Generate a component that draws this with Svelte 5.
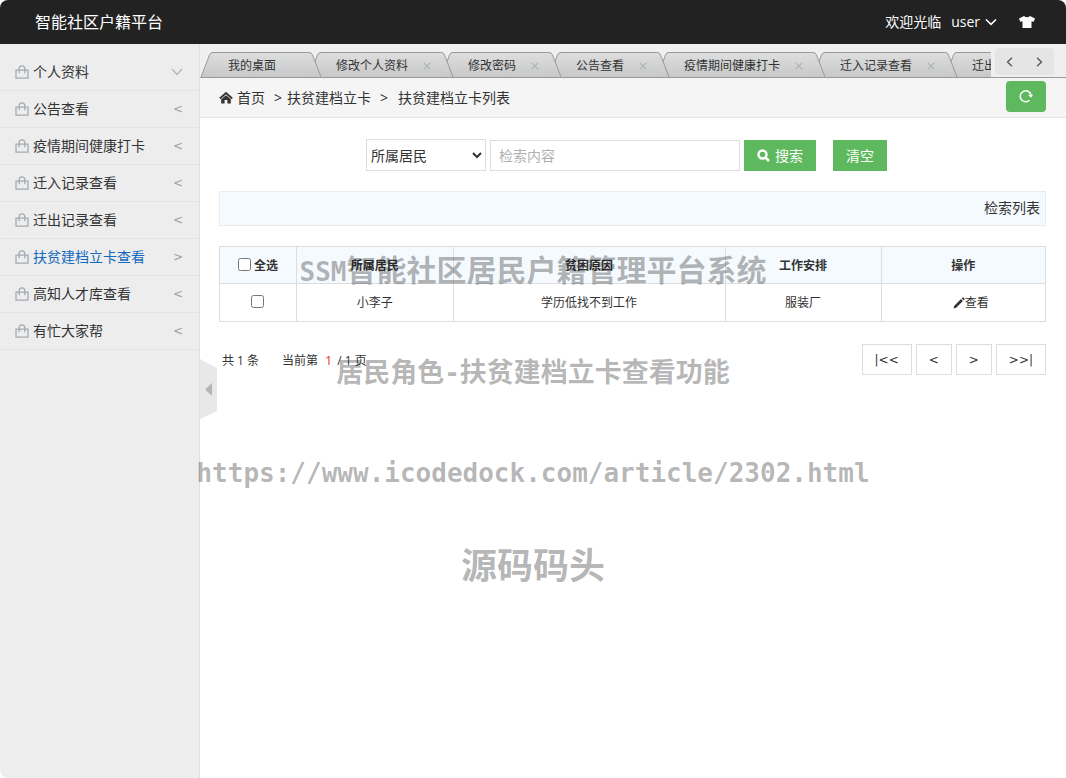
<script lang="ts">
interface MenuItem {
	name: string;
	arrow: "down" | "left" | "right";
}

const menu: MenuItem[] = [
	{ name: "个人资料", arrow: "down" },
	{ name: "公告查看", arrow: "left" },
	{ name: "疫情期间健康打卡", arrow: "left" },
	{ name: "迁入记录查看", arrow: "left" },
	{ name: "迁出记录查看", arrow: "left" },
	{ name: "扶贫建档立卡查看", arrow: "right" },
	{ name: "高知人才库查看", arrow: "left" },
	{ name: "有忙大家帮", arrow: "left" },
];

const tabs = [
	"我的桌面",
	"修改个人资料",
	"修改密码",
	"公告查看",
	"疫情期间健康打卡",
	"迁入记录查看",
	"迁出记录查看",
];

const rows = [{ id: 1, resident: "小李子", reason: "学历低找不到工作", job: "服装厂" }];

let keyword = "";
let checked: number[] = [];

$: allChecked = checked.length === rows.length;

function toggleAll() {
	checked = allChecked ? [] : rows.map((row) => row.id);
}
</script>

<div class="page">
	<header class="header">
		<h1 class="logo">智能社区户籍平台</h1>
		<div class="user-bar">
			<span>欢迎光临</span>
			<button class="user-btn">
				user
				<svg width="12" height="8" viewBox="0 0 12 8"><path d="M1 1.500 6 6.300 11 1.500" fill="none" stroke="#fff" stroke-width="1.600" /></svg>
			</button>
			<button class="skin-btn" aria-label="换肤">
				<svg width="16" height="12" viewBox="0 0 16 12"><path d="M5 0Q8 2.600 11 0L16 2.500 14.700 5.800 12.500 5.200V12H3.500V5.200L1.300 5.800 0 2.500Z" fill="#fff" /></svg>
			</button>
		</div>
	</header>

	<div class="body">
		<aside class="sidebar">
			{#each menu as item (item.name)}
				<a class="menu-item" class:active={item.arrow === "right"} href="#menu">
					<svg width="14" height="14" viewBox="0 0 14 14">
						<path d="M1 5.200H13V13.200H1Z" fill="none" stroke="#a3abb2" stroke-width="1.300" />
						<path d="M4.200 8.300V3.800Q4.200.8 7 .8T9.800 3.800V8.300" fill="none" stroke="#a3abb2" stroke-width="1.300" />
					</svg>
					<span class="menu-name">{item.name}</span>
					{#if item.arrow === "down"}
						<svg width="12" height="8" viewBox="0 0 12 8"><path d="M1 1 6 6.500 11 1" fill="none" stroke="#b5b5b5" stroke-width="1.200" /></svg>
					{:else}
						<span class="menu-arrow">{item.arrow === "left" ? "<" : ">"}</span>
					{/if}
				</a>
			{/each}
		</aside>

		<main class="main">
			<div class="tab-bar">
				<div class="tabs">
					{#each tabs as tab, i (tab)}
						<div class="tab" style="z-index: {tabs.length - i}">
							<svg width="12" height="25" viewBox="0 0 12 25">
								<path d="M0 25 8.500 3Q9.300.5 12 .5V25Z" fill="url(#tab-fill)" />
								<path d="M0 25 8.500 3Q9.300.5 12 .5" fill="none" stroke="#999" />
							</svg>
							<div class="tab-body">
								<span>{tab}</span>
								{#if i > 0}
									<button class="tab-close" aria-label="关闭">
										<svg width="8" height="8" viewBox="0 0 8 8"><path d="M.7.7 7.300 7.300M7.300.7.7 7.300" stroke="#aab2b8" stroke-width="1.200" /></svg>
									</button>
								{/if}
							</div>
							<svg width="12" height="25" viewBox="0 0 12 25">
								<path d="M0 .5Q2.700.5 3.500 3L12 25H0Z" fill="url(#tab-fill)" />
								<path d="M0 .5Q2.700.5 3.500 3L12 25" fill="none" stroke="#999" />
							</svg>
						</div>
					{/each}
				</div>
				<div class="tab-nav">
					<button aria-label="上一个">
						<svg width="7" height="10" viewBox="0 0 7 10"><path d="M6 .7 1.500 5 6 9.300" fill="none" stroke="#555" stroke-width="1.300" /></svg>
					</button>
					<button aria-label="下一个">
						<svg width="7" height="10" viewBox="0 0 7 10"><path d="M1 .7 5.500 5 1 9.300" fill="none" stroke="#555" stroke-width="1.300" /></svg>
					</button>
				</div>
			</div>

			<nav class="breadcrumb">
				<svg width="14" height="12" viewBox="0 0 14 12">
					<path d="M.8 6.500 7 1 13.200 6.500" fill="none" stroke="#333" stroke-width="1.800" />
					<path d="M2.200 7.200 7 3.200 11.800 7.200V11.500H8.400V8H5.600V11.500H2.200Z" fill="#333" />
				</svg>
				<a href="#home">首页</a>
				<span class="sep">&gt;</span>
				<span>扶贫建档立卡</span>
				<span class="sep wide">&gt;</span>
				<span>扶贫建档立卡列表</span>
				<button class="refresh" aria-label="刷新">
					<svg width="14" height="14" viewBox="0 0 14 14">
						<path d="M10.500 11.300A5.500 5.500 0 1 1 12 5.700" fill="none" stroke="#fff" stroke-width="1.500" />
						<path d="M9 5.800H14L12 8.800Z" fill="#fff" />
					</svg>
				</button>
			</nav>

			<div class="content">
				<form class="search" on:submit|preventDefault>
					<select aria-label="检索字段">
						<option>所属居民</option>
						<option>贫困原因</option>
					</select>
					<input type="text" placeholder="检索内容" aria-label="检索内容" bind:value={keyword} />
					<button class="btn" type="submit">
						<svg width="13" height="13" viewBox="0 0 13 13">
							<circle cx="5.500" cy="5.500" r="4" fill="none" stroke="#fff" stroke-width="2.400" />
							<path d="M8.300 8.300 12 12" stroke="#fff" stroke-width="2.600" />
						</svg>
						搜索
					</button>
					<button class="btn clear" type="button" on:click={() => (keyword = "")}>清空</button>
				</form>

				<div class="list-title">检索列表</div>

				<table>
					<colgroup>
						<col class="c-check" />
						<col class="c-resident" />
						<col class="c-reason" />
						<col class="c-job" />
						<col class="c-action" />
					</colgroup>
					<thead>
						<tr>
							<th>
								<label class="check-all">
									<input type="checkbox" checked={allChecked} on:change={toggleAll} />全选
								</label>
							</th>
							<th>所属居民</th>
							<th>贫困原因</th>
							<th>工作安排</th>
							<th>操作</th>
						</tr>
					</thead>
					<tbody>
						{#each rows as row (row.id)}
							<tr>
								<td><input type="checkbox" value={row.id} bind:group={checked} aria-label={row.resident} /></td>
								<td>{row.resident}</td>
								<td>{row.reason}</td>
								<td>{row.job}</td>
								<td>
									<a class="view" href="#view">
										<svg width="12" height="12" viewBox="0 0 12 12"><path d="M.5 11.500 1.300 8.800 8 2.100 9.900 4 3.200 10.700ZM8.700 1.400 9.700.5Q10 .2 10.400.5L11.500 1.600Q11.800 2 11.500 2.400L10.600 3.300Z" fill="#333" /></svg>查看
									</a>
								</td>
							</tr>
						{/each}
					</tbody>
				</table>

				<div class="pager">
					<span>共 1 条</span>
					<span class="current">当前第 <em>1</em> / 1 页</span>
					<div class="pager-btns">
						<button>|&lt;&lt;</button>
						<button>&lt;</button>
						<button>&gt;</button>
						<button>&gt;&gt;|</button>
					</div>
				</div>
			</div>
		</main>
	</div>

	<button class="collapse" aria-label="收起菜单">
		<svg width="17" height="60" viewBox="0 0 17 60">
			<path d="M0 0 17 9V52L0 60Z" fill="#e8e8e8" />
			<path d="M12 24V37L5 30.500Z" fill="#b5b5b5" />
		</svg>
	</button>

	<div class="watermark">
		<p class="wm-title"><span class="mono">SSM</span>智能社区居民户籍管理平台系统</p>
		<p class="wm-role">居民角色<span class="mono">-</span>扶贫建档立卡查看功能</p>
		<p class="mono">https://www.icodedock.com/article/2302.html</p>
		<p class="wm-brand">源码码头</p>
	</div>

	<svg width="0" height="0">
		<linearGradient id="tab-fill" gradientUnits="userSpaceOnUse" x1="0" y1="0" x2="0" y2="25">
			<stop offset="0" stop-color="#dddedd" />
			<stop offset="1" stop-color="#c8c8c9" />
		</linearGradient>
	</svg>
</div>

<style>
	.page {
		position: relative;
		display: flex;
		flex-direction: column;
		min-height: 100vh;
		overflow: hidden;
		border-radius: 8px;
		background: #fff;
		font-family: "Open Sans", "Noto Sans CJK SC", sans-serif;
		font-size: 14px;
		line-height: 20px;
		color: #333;
	}
	.page * {
		box-sizing: border-box;
	}
	svg {
		display: block;
		flex: none;
	}
	a {
		color: inherit;
		text-decoration: none;
	}
	button {
		padding: 0;
		border: none;
		background: none;
		font: inherit;
		color: inherit;
		cursor: pointer;
	}
	.header {
		display: flex;
		align-items: center;
		justify-content: space-between;
		height: 44px;
		padding: 0 31px 0 35px;
		background: #222;
		color: #fff;
	}
	.logo {
		margin: 0;
		font-size: 16px;
		font-weight: 400;
	}
	.user-bar {
		display: flex;
		align-items: center;
		gap: 10px;
	}
	.user-btn {
		display: flex;
		align-items: center;
		gap: 5px;
	}
	.skin-btn {
		margin-left: 12px;
	}
	.body {
		display: flex;
		flex: 1;
	}
	.sidebar {
		flex: none;
		width: 199px;
		padding-top: 10px;
		background: #ededed;
	}
	.menu-item {
		display: flex;
		align-items: center;
		height: 37px;
		padding: 0 16px 0 15px;
		border-bottom: 1px solid #e2e2e2;
	}
	.menu-item.active .menu-name {
		color: #1269bd;
	}
	.menu-name {
		flex: 1;
		margin-left: 4px;
	}
	.menu-arrow {
		width: 10px;
		font-family: "DejaVu Sans", sans-serif;
		font-size: 12px;
		color: #a0a0a0;
	}
	.main {
		flex: 1;
		min-width: 0;
		border-left: 1px solid #e0e0e0;
	}
	.tab-bar {
		display: flex;
		align-items: flex-end;
		height: 34px;
		padding-right: 12px;
		border-bottom: 1px solid #999;
		background: #efeff0;
	}
	.tabs {
		display: flex;
		flex: 1;
		min-width: 0;
		overflow: hidden;
		margin-right: 4px;
		padding-left: 1px;
	}
	.tab {
		position: relative;
		display: flex;
		flex: none;
		margin-right: -12px;
		font-size: 12px;
		white-space: nowrap;
	}
	.tab-body {
		display: flex;
		align-items: center;
		height: 25px;
		padding: 1px 33px 0 15px;
		border-top: 1px solid #999;
		background: linear-gradient(#dddedd, #c8c8c9);
	}
	.tab-close {
		width: 8px;
		margin: 0 -23px 0 15px;
	}
	.tab-nav {
		display: flex;
		width: 59px;
		height: 27px;
		margin-bottom: 2px;
		border-radius: 4px;
		background: #e5e5e5;
	}
	.tab-nav button {
		display: flex;
		flex: 1;
		align-items: center;
		justify-content: center;
	}
	.breadcrumb {
		display: flex;
		align-items: center;
		height: 40px;
		padding: 0 20px 0 19px;
		border-bottom: 1px solid #e5e5e5;
		background: #f5f5f5;
	}
	.breadcrumb a {
		margin-left: 4px;
	}
	.sep {
		margin: 0 5px 0 9px;
	}
	.sep.wide {
		margin-right: 10px;
	}
	.refresh {
		display: flex;
		align-items: center;
		justify-content: center;
		width: 40px;
		height: 31px;
		margin: 0 0 3px auto;
		border-radius: 4px;
		background: #5eb95e;
	}
	.content {
		padding: 21px 20px 20px 19px;
	}
	.search {
		display: flex;
		align-items: flex-end;
		justify-content: center;
		gap: 4px;
		padding-right: 12px;
	}
	.search select,
	.search input {
		border: 1px solid #ddd;
		border-radius: 0;
		background: #fff;
		font: inherit;
		color: #333;
	}
	.search select {
		width: 120px;
		height: 32px;
	}
	.search input {
		width: 250px;
		height: 31px;
		padding: 0 8px;
	}
	.search input::placeholder {
		color: #b0b0b0;
	}
	.btn {
		display: flex;
		align-items: center;
		gap: 5px;
		height: 31px;
		padding: 0 13px;
		background: #5eb95e;
		color: #fff;
	}
	.clear {
		margin-left: 13px;
	}
	.list-title {
		height: 35px;
		margin: 20px 0;
		padding: 0 5px;
		border: 1px solid #ebebeb;
		background: #f5fafe;
		line-height: 32px;
		text-align: right;
	}
	table {
		width: 100%;
		table-layout: fixed;
		border-collapse: collapse;
		font-size: 12px;
		text-align: center;
	}
	.c-check {
		width: 9.3%;
	}
	.c-resident {
		width: 19%;
	}
	.c-reason {
		width: 32.9%;
	}
	.c-job {
		width: 18.9%;
	}
	.c-action {
		width: 19.9%;
	}
	th,
	td {
		height: 38px;
		padding: 0;
		border: 1px solid #ddd;
	}
	th {
		height: 37px;
		padding-top: 1px;
		background: #f5fafe;
		font-weight: 700;
	}
	table input {
		width: 13px;
		height: 13px;
		margin: 0 0 3px;
		vertical-align: middle;
	}
	.check-all,
	.view {
		display: flex;
		align-items: center;
		justify-content: center;
	}
	.check-all {
		gap: 3px;
	}
	.view {
		padding-left: 15px;
	}
	.pager {
		display: flex;
		align-items: center;
		margin-top: 22px;
		padding-left: 3px;
		font-size: 12px;
	}
	.pager > span {
		padding-top: 2px;
	}
	.current {
		margin-left: 23px;
	}
	.current em {
		margin: 0 2px 0 4px;
		font-style: normal;
		color: #e22;
	}
	.pager-btns {
		display: flex;
		gap: 4px;
		margin-left: auto;
	}
	.pager-btns button {
		height: 31px;
		padding: 0 12px;
		border: 1px solid #ddd;
		font-family: "DejaVu Sans", sans-serif;
	}
	/* handle that lies over the sidebar edge */
	.collapse {
		position: absolute;
		top: 50%;
		left: 200px;
		margin-top: -30px;
	}
	.watermark {
		position: absolute;
		inset: 0;
		display: flex;
		flex-direction: column;
		align-items: center;
		padding-top: 220px;
		z-index: 20;
		font-weight: 700;
		color: rgba(0, 0, 0, 0.3);
		white-space: nowrap;
		pointer-events: none;
	}
	.watermark p {
		margin: 0;
		line-height: 100px;
	}
	.watermark .wm-title {
		font-size: 30px;
	}
	.watermark .wm-role {
		font-size: 27px;
	}
	.watermark .wm-brand {
		font-size: 36px;
		line-height: 86px;
	}
	.watermark .mono {
		font-family: "DejaVu Sans Mono", monospace;
		font-size: 26px;
	}
</style>
